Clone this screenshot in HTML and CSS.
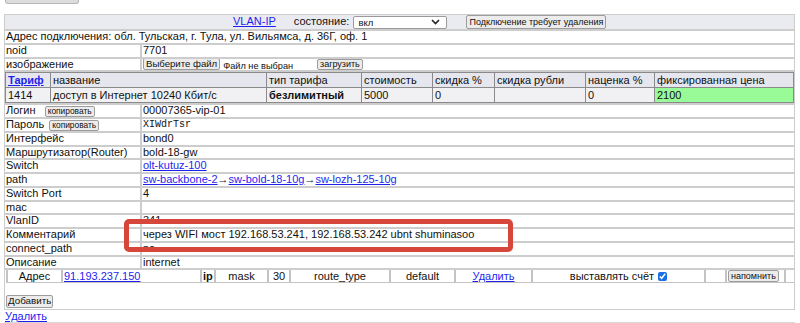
FILE: index.html
```
<!DOCTYPE html>
<html lang="ru">
<head>
    <meta charset="UTF-8">
    <title>VLAN-IP</title>
    <link rel="stylesheet" href="styles.css">
</head>
<body>
    <div class="top-btn"></div>

    <table class="card">
        <colgroup>
            <col class="col-label">
            <col>
        </colgroup>
        <tbody>
            <tr>
                <td colspan="2" class="head-cell">
                    <div class="head-bar">
                        <a href="#" class="link">VLAN-IP</a>
                        <span class="state-label">состояние:</span>
                        <span class="select-wrap">
                            <select class="state-select">
                                <option selected>вкл</option>
                                <option>выкл</option>
                            </select>
                            <svg class="chevron" width="9" height="6" viewBox="0 0 9 6"><path d="M1 1l3.5 3.5L8 1" fill="none" stroke="#222" stroke-width="1.6"/></svg>
                        </span>
                        <button class="btn btn-warn">Подключение требует удаления</button>
                    </div>
                </td>
            </tr>
            <tr>
                <td colspan="2">Адрес подключения: обл. Тульская, г. Тула, ул. Вильямса, д. 36Г, оф. 1</td>
            </tr>
            <tr>
                <td>noid</td>
                <td>7701</td>
            </tr>
            <tr>
                <td>изображение</td>
                <td class="upload-cell">
                    <span class="file-input"><button class="btn btn-file">Выберите файл</button><span class="file-name">Файл не выбран</span></span><button class="btn btn-small">загрузить</button>
                </td>
            </tr>
            <tr>
                <td colspan="2" class="nest">
                    <table class="tariff">
                        <colgroup>
                            <col style="width:45px">
                            <col style="width:216px">
                            <col style="width:95px">
                            <col style="width:71px">
                            <col style="width:62px">
                            <col style="width:91px">
                            <col style="width:69px">
                            <col>
                        </colgroup>
                        <tr class="tariff-head">
                            <th><a href="#" class="link bold">Тариф</a></th>
                            <th>название</th>
                            <th>тип тарифа</th>
                            <th>стоимость</th>
                            <th>скидка %</th>
                            <th>скидка рубли</th>
                            <th>наценка %</th>
                            <th>фиксированная цена</th>
                        </tr>
                        <tr class="tariff-row">
                            <td>1414</td>
                            <td>доступ в Интернет 10240 Кбит/с</td>
                            <td class="bold">безлимитный</td>
                            <td>5000</td>
                            <td>0</td>
                            <td></td>
                            <td>0</td>
                            <td class="fixed">2100</td>
                        </tr>
                    </table>
                </td>
            </tr>
            <tr>
                <td>Логин <button class="btn btn-copy">копировать</button></td>
                <td>00007365-vip-01</td>
            </tr>
            <tr>
                <td>Пароль <button class="btn btn-copy btn-copy-tight">копировать</button></td>
                <td class="mono">XIWdrTsr</td>
            </tr>
            <tr>
                <td>Интерфейс</td>
                <td>bond0</td>
            </tr>
            <tr>
                <td>Маршрутизатор(Router)</td>
                <td>bold-18-gw</td>
            </tr>
            <tr>
                <td>Switch</td>
                <td><a href="#" class="link">olt-kutuz-100</a></td>
            </tr>
            <tr>
                <td>path</td>
                <td><a href="#" class="link">sw-backbone-2</a>→<a href="#" class="link">sw-bold-18-10g</a>→<a href="#" class="link">sw-lozh-125-10g</a></td>
            </tr>
            <tr>
                <td>Switch Port</td>
                <td>4</td>
            </tr>
            <tr>
                <td>mac</td>
                <td></td>
            </tr>
            <tr>
                <td>VlanID</td>
                <td>341</td>
            </tr>
            <tr>
                <td>Комментарий</td>
                <td>через WIFI мост 192.168.53.241, 192.168.53.242 ubnt shuminasoo</td>
            </tr>
            <tr>
                <td>connect_path</td>
                <td>no</td>
            </tr>
            <tr>
                <td>Описание</td>
                <td>internet</td>
            </tr>
            <tr>
                <td colspan="2" class="nest routes-cell">
                    <table class="routes">
                        <colgroup>
                            <col style="width:55px">
                            <col style="width:139px">
                            <col style="width:14px">
                            <col style="width:53px">
                            <col style="width:22px">
                            <col style="width:100px">
                            <col style="width:65px">
                            <col style="width:77px">
                            <col style="width:173px">
                            <col style="width:21px">
                            <col style="width:59px">
                            <col>
                        </colgroup>
                        <tr>
                            <td class="center">Адрес</td>
                            <td><a href="#" class="link">91.193.237.150</a></td>
                            <td class="bold">ip</td>
                            <td class="center">mask</td>
                            <td class="center">30</td>
                            <td class="center">route_type</td>
                            <td class="center">default</td>
                            <td class="center"><a href="#" class="link">Удалить</a></td>
                            <td class="center">выставлять счёт <input type="checkbox" class="bill-check" checked></td>
                            <td></td>
                            <td><button class="btn btn-small">напомнить</button></td>
                            <td></td>
                        </tr>
                    </table>
                    <div class="add-row">
                        <button class="btn btn-add">Добавить</button>
                    </div>
                </td>
            </tr>
        </tbody>
    </table>

    <div class="footer-link">
        <a href="#" class="link">Удалить</a>
    </div>

    <div class="mark"></div>
</body>
</html>
```

FILE: styles.css
```
:root {
    --link-color: #1f1fee;
    --line-color: #cdcdcd;
    --head-bg: #eaeaf1;
}
body {
    margin: 0;
    padding: 0 5px 0 4px;
    font-family: "Liberation Sans", Arial, sans-serif;
    font-size: 11px;
    color: #111;
    background-color: #fff;
    position: relative;
}
.top-btn {
    width: 72px;
    height: 3px;
    margin-left: 1px;
    background-color: #dcdcdc;
    border: 1px solid #b8b8b8;
    border-top: none;
    border-radius: 0 0 3px 3px;
}
.link {
    color: var(--link-color);
    text-decoration: underline;
}
.bold {
    font-weight: bold;
}
.center {
    text-align: center;
}
.mono {
    font-family: "Liberation Mono", "Courier New", monospace;
    font-size: 10px;
}
.card {
    width: 791px;
    margin-top: 10px;
    border-collapse: separate;
    border-spacing: 0;
    table-layout: fixed;
}
.col-label {
    width: 137px;
}
.card > tbody > tr > td {
    border: 1px solid var(--line-color);
    padding: 0 1px;
    height: 11.75px;
    line-height: 11.75px;
    white-space: nowrap;
    overflow: hidden;
    vertical-align: middle;
}
.card > tbody > tr > td.head-cell {
    background-color: var(--head-bg);
    height: 14px;
}
.head-bar {
    display: flex;
    align-items: center;
    padding-left: 227px;
}
.state-label {
    margin-left: 18px;
}
.select-wrap {
    display: inline-flex;
    align-items: center;
    margin-left: 4px;
}
.state-select {
    appearance: none;
    width: 94px;
    height: 13px;
    padding: 0 4px;
    border: 1px solid #9a9a9a;
    border-radius: 2px;
    background-color: #fff;
    font-family: inherit;
    font-size: 9.5px;
    color: #111;
}
.chevron {
    margin-left: -16px;
    pointer-events: none;
}
.btn {
    appearance: none;
    font-family: "Liberation Sans", Arial, sans-serif;
    color: #111;
    background-color: #ececec;
    border: 1px solid #9c9c9c;
    border-radius: 2px;
    padding: 0 2px;
    line-height: 10px;
    height: 12px;
    vertical-align: middle;
}
.btn-warn {
    margin-left: 26px;
    font-size: 9px;
    height: 14px;
}
.card > tbody > tr > td.upload-cell {
    height: 11px;
    line-height: 11px;
}
.upload-cell .btn,
.upload-cell .file-input {
    vertical-align: top;
}
.file-input {
    display: inline-block;
    width: 174px;
    height: 11px;
    line-height: 12px;
}
.btn-file {
    font-size: 9.6px;
    height: 12px;
    margin-top: -1px;
}
.file-name {
    margin-left: 3px;
    font-size: 9.2px;
}
.btn-small {
    font-size: 9px;
}
.upload-cell .btn-small {
    height: 11px;
    line-height: 9px;
}
.btn-copy {
    font-size: 8.4px;
    margin-left: 6px;
    height: 11px;
    line-height: 9px;
}
.btn-copy-tight {
    margin-left: 2px;
}
.card > tbody > tr > td.nest {
    padding: 0;
    height: auto;
    line-height: normal;
}
.tariff {
    width: 100%;
    border-collapse: collapse;
    table-layout: fixed;
}
.tariff th,
.tariff td {
    border: 1px solid #8a8a8a;
    padding: 0 2px;
    height: 14px;
    line-height: 14px;
    text-align: left;
    font-weight: normal;
    white-space: nowrap;
    overflow: hidden;
}
.tariff .bold {
    font-weight: bold;
}
.tariff-head {
    background-color: #e6e6ee;
}
.tariff-row {
    background-color: #f1f1f4;
}
.tariff-row .fixed {
    background-color: palegreen;
}
.routes-cell {
    padding-left: 1px !important;
}
.routes {
    width: 790px;
    margin-top: -2px;
    border-collapse: collapse;
    table-layout: fixed;
}
.routes td {
    border: 1px solid #c4c4c4;
    border-width: 1px 2px;
    padding: 0 1px;
    height: 12px;
    line-height: 12px;
    white-space: nowrap;
    overflow: hidden;
}
.bill-check {
    width: 9px;
    height: 9px;
    margin: 0 0 0 1px;
    vertical-align: -1px;
    accent-color: #1b6fe4;
}
.add-row {
    padding: 11px 0 1px;
}
.btn-add {
    font-size: 9.8px;
    height: 13px;
    padding: 0 1px;
}
.footer-link {
    padding: 0 1px;
    line-height: 12px;
    border-bottom: 2px solid #d8d8d8;
}
.mark {
    position: absolute;
    left: 124px;
    top: 219px;
    width: 389px;
    height: 33px;
    box-sizing: border-box;
    border: 5px solid #d6463a;
    border-radius: 5px;
}
```
